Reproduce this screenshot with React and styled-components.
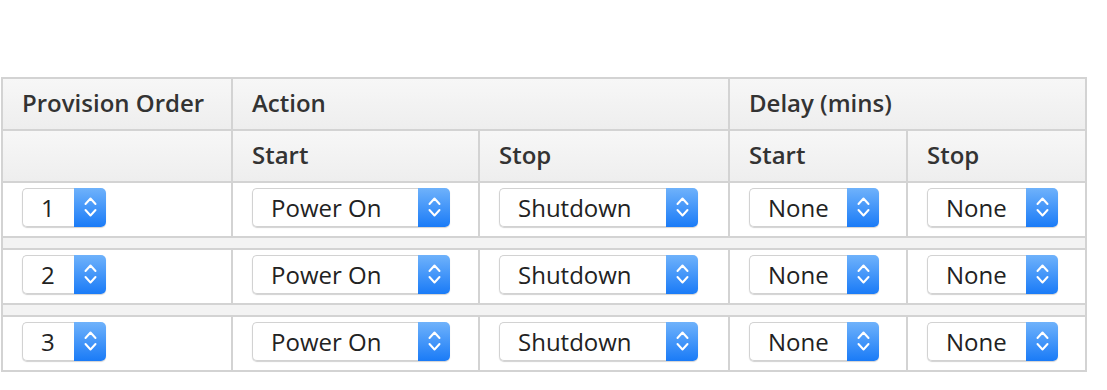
import React from 'react'
import styled, { createGlobalStyle } from 'styled-components'

const GlobalStyle = createGlobalStyle`
	body{
		margin: 0;
		background: #fff;
		font-family: "Open Sans", "Liberation Sans", sans-serif;
	}
`

const Page = styled.div`
	padding: 77px 0 0 1px;
`

const Grid = styled.div`
	display: grid;
	width: 1086px;
	box-sizing: border-box;
	grid-template-columns: 228px 245px 248px 176px 177px;
	grid-template-rows: 50px 50px 53px 10px 53px 10px 53px;
	gap: 2px;
	padding: 2px;
	background: #d3d3d3;
`

const HeadCell = styled.div`
	grid-column: span ${(p) => p.span || 1};
	display: flex;
	align-items: center;
	padding: 0 20px 3px 19px;
	background: linear-gradient(#f7f7f7, #eeeeee);
	color: #333;
	font-size: 24px;
	font-weight: 600;
`

const Cell = styled.div`
	background: #fff;
	padding: 5px 0 0 19px;
`

const Spacer = styled.div`
	grid-column: 1 / -1;
	background: #f3f3f3;
`

const SelectBox = styled.div`
	display: flex;
	width: ${(p) => p.width}px;
	height: 39px;
	border-radius: 5px;
	box-shadow: 0 1px 1px rgba(0, 0, 0, 0.18);
`

const Label = styled.div`
	flex: 1;
	box-sizing: border-box;
	padding-left: 18px;
	border: 1px solid #d2d2d2;
	border-right: none;
	border-radius: 5px 0 0 5px;
	background: #fff;
	color: #222;
	font-size: 24px;
	line-height: 37px;
	white-space: nowrap;
`

const Stepper = styled.div`
	width: 32px;
	display: flex;
	align-items: center;
	justify-content: center;
	padding-bottom: 2px;
	box-sizing: border-box;
	border-radius: 0 5px 5px 0;
	background: linear-gradient(#6fb2fb, #1a7bf7);
`

function Chevrons() {
	return (
		<svg width='13' height='20' viewBox='0 0 13 20' fill='none' stroke='#fff' strokeWidth='2' strokeLinecap='round' strokeLinejoin='round'>
			<polyline points='1.5,7 6.5,1.5 11.5,7' />
			<polyline points='1.5,13 6.5,18.5 11.5,13' />
		</svg>
	)
}

function Select({ value, width }) {
	return (
		<SelectBox width={width}>
			<Label>{value}</Label>
			<Stepper>
				<Chevrons />
			</Stepper>
		</SelectBox>
	)
}

const rows = ['1', '2', '3']

function App() {
	return (
		<Page>
			<GlobalStyle />
			<Grid>
				<HeadCell>Provision Order</HeadCell>
				<HeadCell span={2}>Action</HeadCell>
				<HeadCell span={2}>Delay (mins)</HeadCell>

				<HeadCell />
				<HeadCell>Start</HeadCell>
				<HeadCell>Stop</HeadCell>
				<HeadCell>Start</HeadCell>
				<HeadCell>Stop</HeadCell>

				{rows.map((order, i) => (
					<React.Fragment key={order}>
						{i > 0 && <Spacer />}
						<Cell><Select value={order} width={84} /></Cell>
						<Cell><Select value='Power On' width={198} /></Cell>
						<Cell><Select value='Shutdown' width={199} /></Cell>
						<Cell><Select value='None' width={130} /></Cell>
						<Cell><Select value='None' width={131} /></Cell>
					</React.Fragment>
				))}
			</Grid>
		</Page>
	)
}

export default App
